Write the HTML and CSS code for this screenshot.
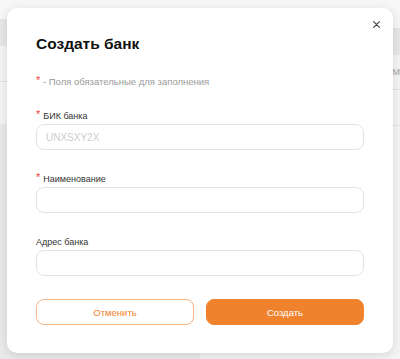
FILE: index.html
```html
<!DOCTYPE html>
<html lang="ru">
<head>
<meta charset="utf-8">
<title>Создать банк</title>
<link rel="stylesheet" href="styles.css">
</head>
<body>
<div class="page">
  <div class="bg-col bg-left">
    <div class="band-top"></div>
    <div class="band-head"></div>
    <div class="band-row"></div>
    <div class="band-row short"></div>
    <div class="band-dark"></div>
  </div>
  <div class="bg-col bg-right">
    <div class="band-top tall"></div>
    <div class="band-head"></div>
    <div class="band-row cell"><span class="cell-text">М</span></div>
    <div class="band-row"></div>
  </div>
</div>

<div class="modal">
  <button class="close" aria-label="Закрыть">
    <svg width="7" height="7" viewBox="0 0 7 7"><path d="M0.6 0.6L6.4 6.4M6.4 0.6L0.6 6.4" stroke="#3a3a44" stroke-width="1.1" stroke-linecap="round"/></svg>
  </button>
  <h1 class="title">Создать банк</h1>
  <p class="note"><span class="req">*</span> - Поля обязательные для заполнения</p>

  <div class="field">
    <label class="label"><span class="req">*</span>БИК банка</label>
    <input class="input" placeholder="UNXSXY2X">
  </div>
  <div class="field">
    <label class="label"><span class="req">*</span>Наименование</label>
    <input class="input">
  </div>
  <div class="field">
    <label class="label">Адрес банка</label>
    <input class="input">
  </div>

  <div class="actions">
    <button class="btn btn-cancel">Отменить</button>
    <button class="btn btn-create">Создать</button>
  </div>
</div>
</body>
</html>
```

FILE: styles.css
```css
* { box-sizing: border-box; }
html, body { margin: 0; padding: 0; }
body {
  width: 400px;
  height: 359px;
  overflow: hidden;
  font-family: "Liberation Sans", Arial, sans-serif;
  background: #f3f3f3;
  position: relative;
}
.page {
  display: flex;
  height: 359px;
}
.bg-col { flex: 1; display: flex; flex-direction: column; }
.band-top { height: 19px; background: #f6f6f6; }
.band-top.tall { height: 28px; }
.band-head { height: 27px; background: #e6e6e6; }
.band-row { height: 36px; background: #f4f4f4; border-bottom: 1px solid #e2e2e2; }
.band-row.short { height: 42px; border-bottom: none; }
.band-row.cell { height: 35px; display: flex; align-items: center; justify-content: flex-end; }
.cell-text { font-size: 9px; color: #a0a0a0; margin-right: 0; }
.band-dark { flex: 1; background: #e9e9e9; }

.modal {
  position: absolute;
  left: 7px;
  top: 8px;
  width: 386px;
  height: 345px;
  background: #fff;
  border-radius: 10px;
  box-shadow: 0 2px 10px rgba(0, 0, 0, 0.12);
  padding: 26px 29px 28px;
}
.close {
  position: absolute;
  top: 10px;
  right: 10px;
  width: 13px;
  height: 13px;
  padding: 0;
  border: none;
  background: none;
  display: flex;
  align-items: center;
  justify-content: center;
}
.title {
  margin: 0;
  font-size: 15.5px;
  line-height: 20px;
  font-weight: bold;
  color: #111;
}
.note {
  margin: 22px 0 22px;
  height: 12px;
  font-size: 9.5px;
  line-height: 12px;
  color: #9a9a9a;
}
.req {
  color: #f0403c;
  font-size: 11px;
  line-height: 10px;
  margin-right: 3px;
  position: relative;
  top: -1px;
}
.note .req { margin-right: 0; }
.field {
  display: flex;
  flex-direction: column;
  margin-bottom: 23px;
}
.label {
  display: block;
  height: 12px;
  font-size: 9px;
  line-height: 12px;
  color: #333;
  margin-bottom: 2px;
}
.input {
  height: 26px;
  border: 1px solid #e2e2e2;
  border-radius: 8px;
  padding: 0 9px;
  font-family: inherit;
  font-size: 10px;
  color: #333;
  outline: none;
  background: #fff;
}
.input::placeholder { color: #cdcdcd; }
.actions {
  display: flex;
  gap: 12px;
}
.btn {
  flex: 1;
  height: 26px;
  border-radius: 8px;
  font-family: inherit;
  font-size: 9.5px;
  cursor: pointer;
}
.btn-cancel {
  background: #fff;
  border: 1px solid #f5b584;
  color: #f0822d;
}
.btn-create {
  background: #f0822d;
  border: 1px solid #f0822d;
  color: #fff;
}
```
